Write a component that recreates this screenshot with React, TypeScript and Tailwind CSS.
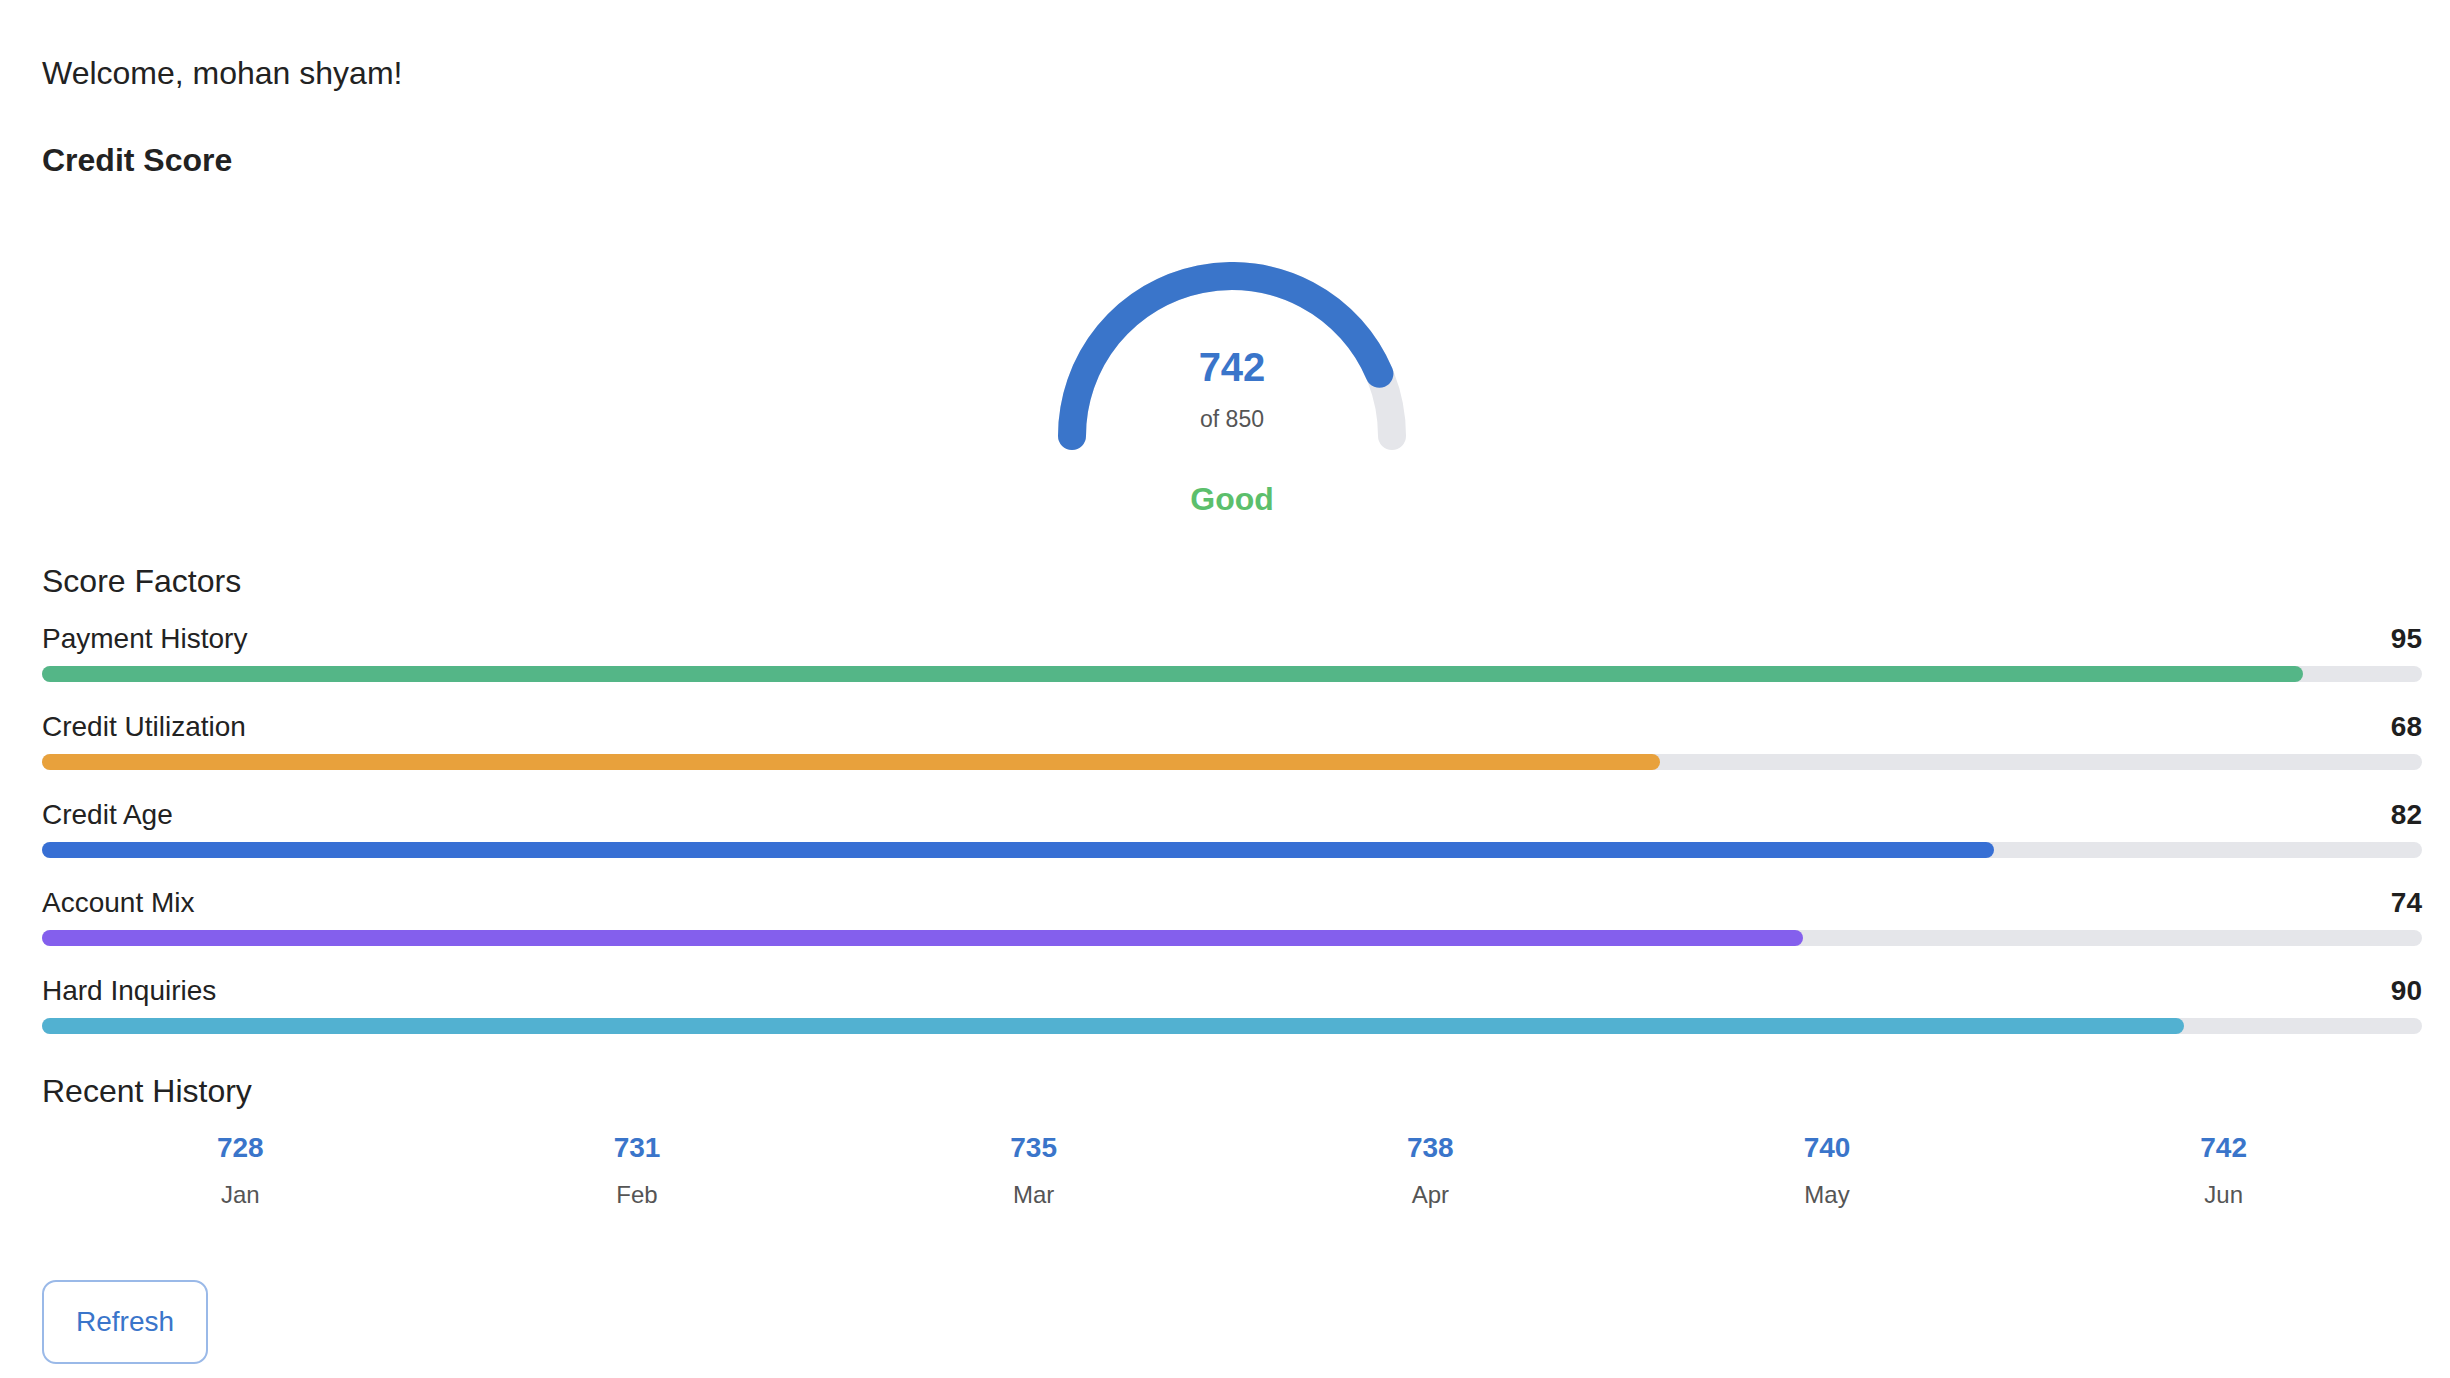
import React from 'react';

interface Factor {
  label: string;
  value: number;
  color: string;
}

const factors: Factor[] = [
  { label: 'Payment History', value: 95, color: 'bg-[#54b687]' },
  { label: 'Credit Utilization', value: 68, color: 'bg-[#e8a13c]' },
  { label: 'Credit Age', value: 82, color: 'bg-[#376fd4]' },
  { label: 'Account Mix', value: 74, color: 'bg-[#845fed]' },
  { label: 'Hard Inquiries', value: 90, color: 'bg-[#52b1d1]' },
];

const history = [
  { month: 'Jan', score: 728 },
  { month: 'Feb', score: 731 },
  { month: 'Mar', score: 735 },
  { month: 'Apr', score: 738 },
  { month: 'May', score: 740 },
  { month: 'Jun', score: 742 },
];

const ScoreGauge: React.FC<{ score: number; max: number }> = ({ score, max }) => {
  const cx = 174;
  const cy = 174;
  const r = 160;
  const angle = Math.PI * (1 - score / max);
  const ex = cx + r * Math.cos(angle);
  const ey = cy - r * Math.sin(angle);

  return (
    <div className="relative w-[348px] h-[188px]">
      <svg width="348" height="188" viewBox="0 0 348 188">
        <path
          d={`M ${cx - r} ${cy} A ${r} ${r} 0 0 1 ${cx + r} ${cy}`}
          fill="none"
          stroke="#e5e6ea"
          strokeWidth="28"
          strokeLinecap="round"
        />
        <path
          d={`M ${cx - r} ${cy} A ${r} ${r} 0 0 1 ${ex} ${ey}`}
          fill="none"
          stroke="#3a75ca"
          strokeWidth="28"
          strokeLinecap="round"
        />
      </svg>
      <div className="absolute inset-x-0 top-[85px] flex flex-col items-center">
        <span className="text-[40px] leading-none font-bold text-[#3a75ca]">{score}</span>
        <span className="mt-[21px] text-[23px] leading-none text-[#555]">of {max}</span>
      </div>
    </div>
  );
};

const App: React.FC = () => {
  return (
    <div
      className="min-h-screen bg-white pl-[42px] pr-[28px] pt-[55px] pb-[16px] text-[#222]"
      style={{ fontFamily: '"Liberation Sans", Arial, sans-serif' }}
    >
      <h1 className="text-[32px] leading-[36px] font-normal">Welcome, mohan shyam!</h1>

      <h2 className="mt-[51px] text-[32px] leading-[36px] font-bold">Credit Score</h2>

      <div className="mt-[84px] flex flex-col items-center">
        <ScoreGauge score={742} max={850} />
        <div className="mt-[33px] text-[32px] leading-none font-bold text-[#5cbf6c]">Good</div>
      </div>

      <h3 className="mt-[48px] text-[32px] leading-[36px] font-normal">Score Factors</h3>

      <div className="mt-[24px] flex flex-col gap-[29px]">
        {factors.map((f) => (
          <div key={f.label}>
            <div className="flex justify-between text-[28px] leading-[32px]">
              <span>{f.label}</span>
              <span className="font-bold text-[#1f1f1f]">{f.value}</span>
            </div>
            <div className="mt-[11px] h-[16px] w-full rounded-full bg-[#e5e6ea]">
              <div className={`h-full rounded-full ${f.color}`} style={{ width: `${f.value}%` }} />
            </div>
          </div>
        ))}
      </div>

      <h3 className="mt-[39px] text-[32px] leading-[36px] font-normal">Recent History</h3>

      <div className="mt-[23px] grid grid-cols-6">
        {history.map((h) => (
          <div key={h.month} className="flex flex-col items-center">
            <span className="text-[28px] leading-[32px] font-bold text-[#3a75ca]">{h.score}</span>
            <span className="mt-[17px] text-[24px] leading-[28px] text-[#555]">{h.month}</span>
          </div>
        ))}
      </div>

      <button className="mt-[71px] rounded-[14px] border-2 border-[#9ab9e8] bg-white px-[32px] py-[24px] text-[28px] leading-[32px] text-[#3a75ca]">
        Refresh
      </button>
    </div>
  );
};

export default App;
